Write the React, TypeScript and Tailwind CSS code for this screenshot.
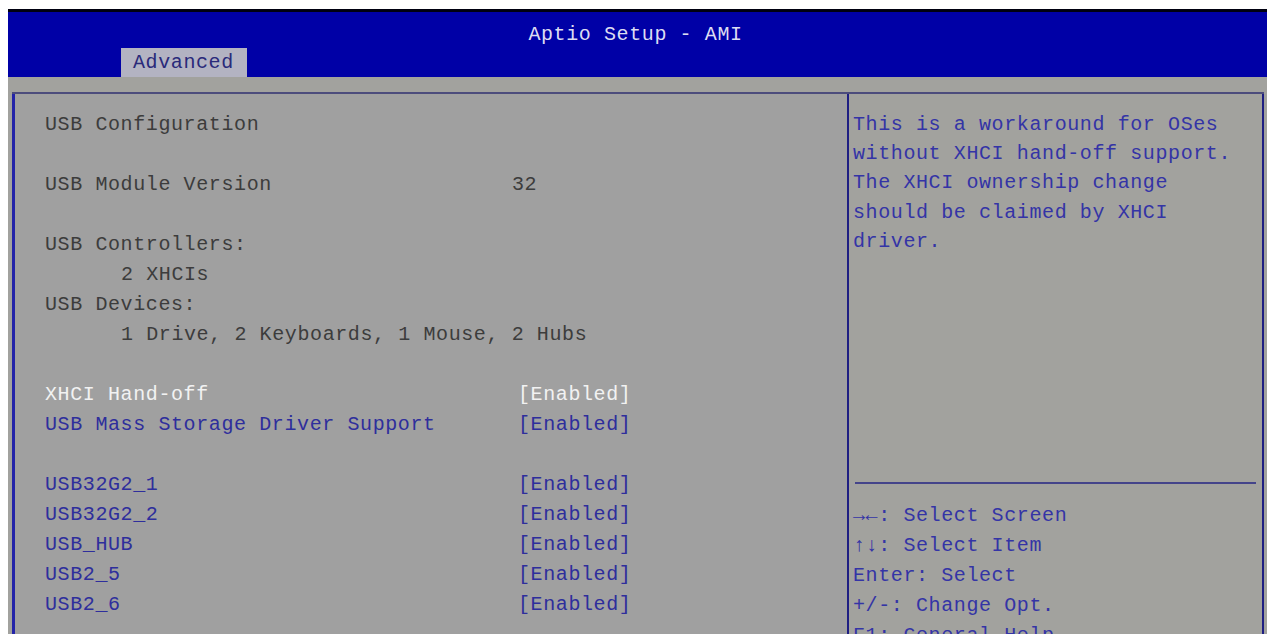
import React from 'react';

type Row =
  | { kind: 'blank' }
  | { kind: 'text'; label: string; value?: string; indent?: boolean }
  | { kind: 'option'; label: string; value: string; selected?: boolean };

const rows: Row[] = [
  { kind: 'text', label: 'USB Configuration' },
  { kind: 'blank' },
  { kind: 'text', label: 'USB Module Version', value: '32' },
  { kind: 'blank' },
  { kind: 'text', label: 'USB Controllers:' },
  { kind: 'text', label: '2 XHCIs', indent: true },
  { kind: 'text', label: 'USB Devices:' },
  { kind: 'text', label: '1 Drive, 2 Keyboards, 1 Mouse, 2 Hubs', indent: true },
  { kind: 'blank' },
  { kind: 'option', label: 'XHCI Hand-off', value: '[Enabled]', selected: true },
  { kind: 'option', label: 'USB Mass Storage Driver Support', value: '[Enabled]' },
  { kind: 'blank' },
  { kind: 'option', label: 'USB32G2_1', value: '[Enabled]' },
  { kind: 'option', label: 'USB32G2_2', value: '[Enabled]' },
  { kind: 'option', label: 'USB_HUB', value: '[Enabled]' },
  { kind: 'option', label: 'USB2_5', value: '[Enabled]' },
  { kind: 'option', label: 'USB2_6', value: '[Enabled]' },
];

const helpLines = [
  'This is a workaround for OSes',
  'without XHCI hand-off support.',
  'The XHCI ownership change',
  'should be claimed by XHCI',
  'driver.',
];

const keyLines = [
  '\u2192\u2190: Select Screen',
  '\u2191\u2193: Select Item',
  'Enter: Select',
  '+/-: Change Opt.',
  'F1: General Help',
];

// Una fila del panel izquierdo
const SetupRow: React.FC<{ row: Row }> = ({ row }) => {
  if (row.kind === 'blank') return <div className="h-[30px]" />;

  if (row.kind === 'text') {
    return (
      <div className="h-[30px] flex items-center text-[#3c3c3c]">
        <span className={`w-[467px] shrink-0 whitespace-pre ${row.indent ? 'pl-[76px]' : ''}`}>{row.label}</span>
        {row.value && <span>{row.value}</span>}
      </div>
    );
  }

  const color = row.selected ? 'text-[#f2f2f2]' : 'text-[#2e2e9c]';
  return (
    <div className={`h-[30px] flex items-center ${color}`}>
      <span className="w-[473px] shrink-0 whitespace-pre">{row.label}</span>
      <span>{row.value}</span>
    </div>
  );
};

export default function App() {
  return (
    <div className="min-h-screen bg-white pt-[9px] pl-[8px]">
      <div
        className="w-[1259px] h-[625px] overflow-hidden bg-[#a2a29e] flex flex-col text-[20px] tracking-[0.6px]"
        style={{ fontFamily: '"Liberation Mono", "DejaVu Sans Mono", monospace' }}
      >
        {/* Cabecera azul */}
        <div className="h-[68px] shrink-0 bg-[#0000a6] border-t-[3px] border-[#000010] flex flex-col">
          <div className="h-[36px] shrink-0 flex justify-center text-[#dcdcf2] pt-[10px] leading-[26px] pr-[4px]">
            Aptio Setup - AMI
          </div>
          <div className="h-[29px] shrink-0 flex pl-[113px]">
            <div className="h-[29px] w-[126px] bg-[#b3b3c2] text-[#2a2a7a] flex items-center pl-[12px]">
              Advanced
            </div>
          </div>
        </div>

        <div className="h-[15px] shrink-0" />

        {/* Paneles */}
        <div className="flex-1 flex border-t-2 border-[#4c4c7c] ml-[4px] mr-[3px]">
          <div className="w-[835px] shrink-0 border-l-[3px] border-[#2323a8] bg-[#a0a0a0] pl-[30px] pt-[16px]">
            {rows.map((r, i) => (
              <SetupRow key={i} row={r} />
            ))}
          </div>

          <div className="flex-1 flex flex-col border-l-2 border-r-2 border-[#1e1e82] bg-[#a2a29e] px-[4px]">
            <div className="h-[388px] shrink-0 pt-[16px] text-[#3434a6]">
              {helpLines.map((l) => (
                <div key={l} className="h-[29.4px] flex items-center whitespace-pre">
                  {l}
                </div>
              ))}
            </div>
            <div className="h-[2px] bg-[#44448a] mx-[2px]" />
            <div className="pt-[17px] text-[#3434a6]">
              {keyLines.map((l) => (
                <div key={l} className="h-[30px] flex items-center whitespace-pre">
                  {l}
                </div>
              ))}
            </div>
          </div>
        </div>
      </div>
    </div>
  );
}
